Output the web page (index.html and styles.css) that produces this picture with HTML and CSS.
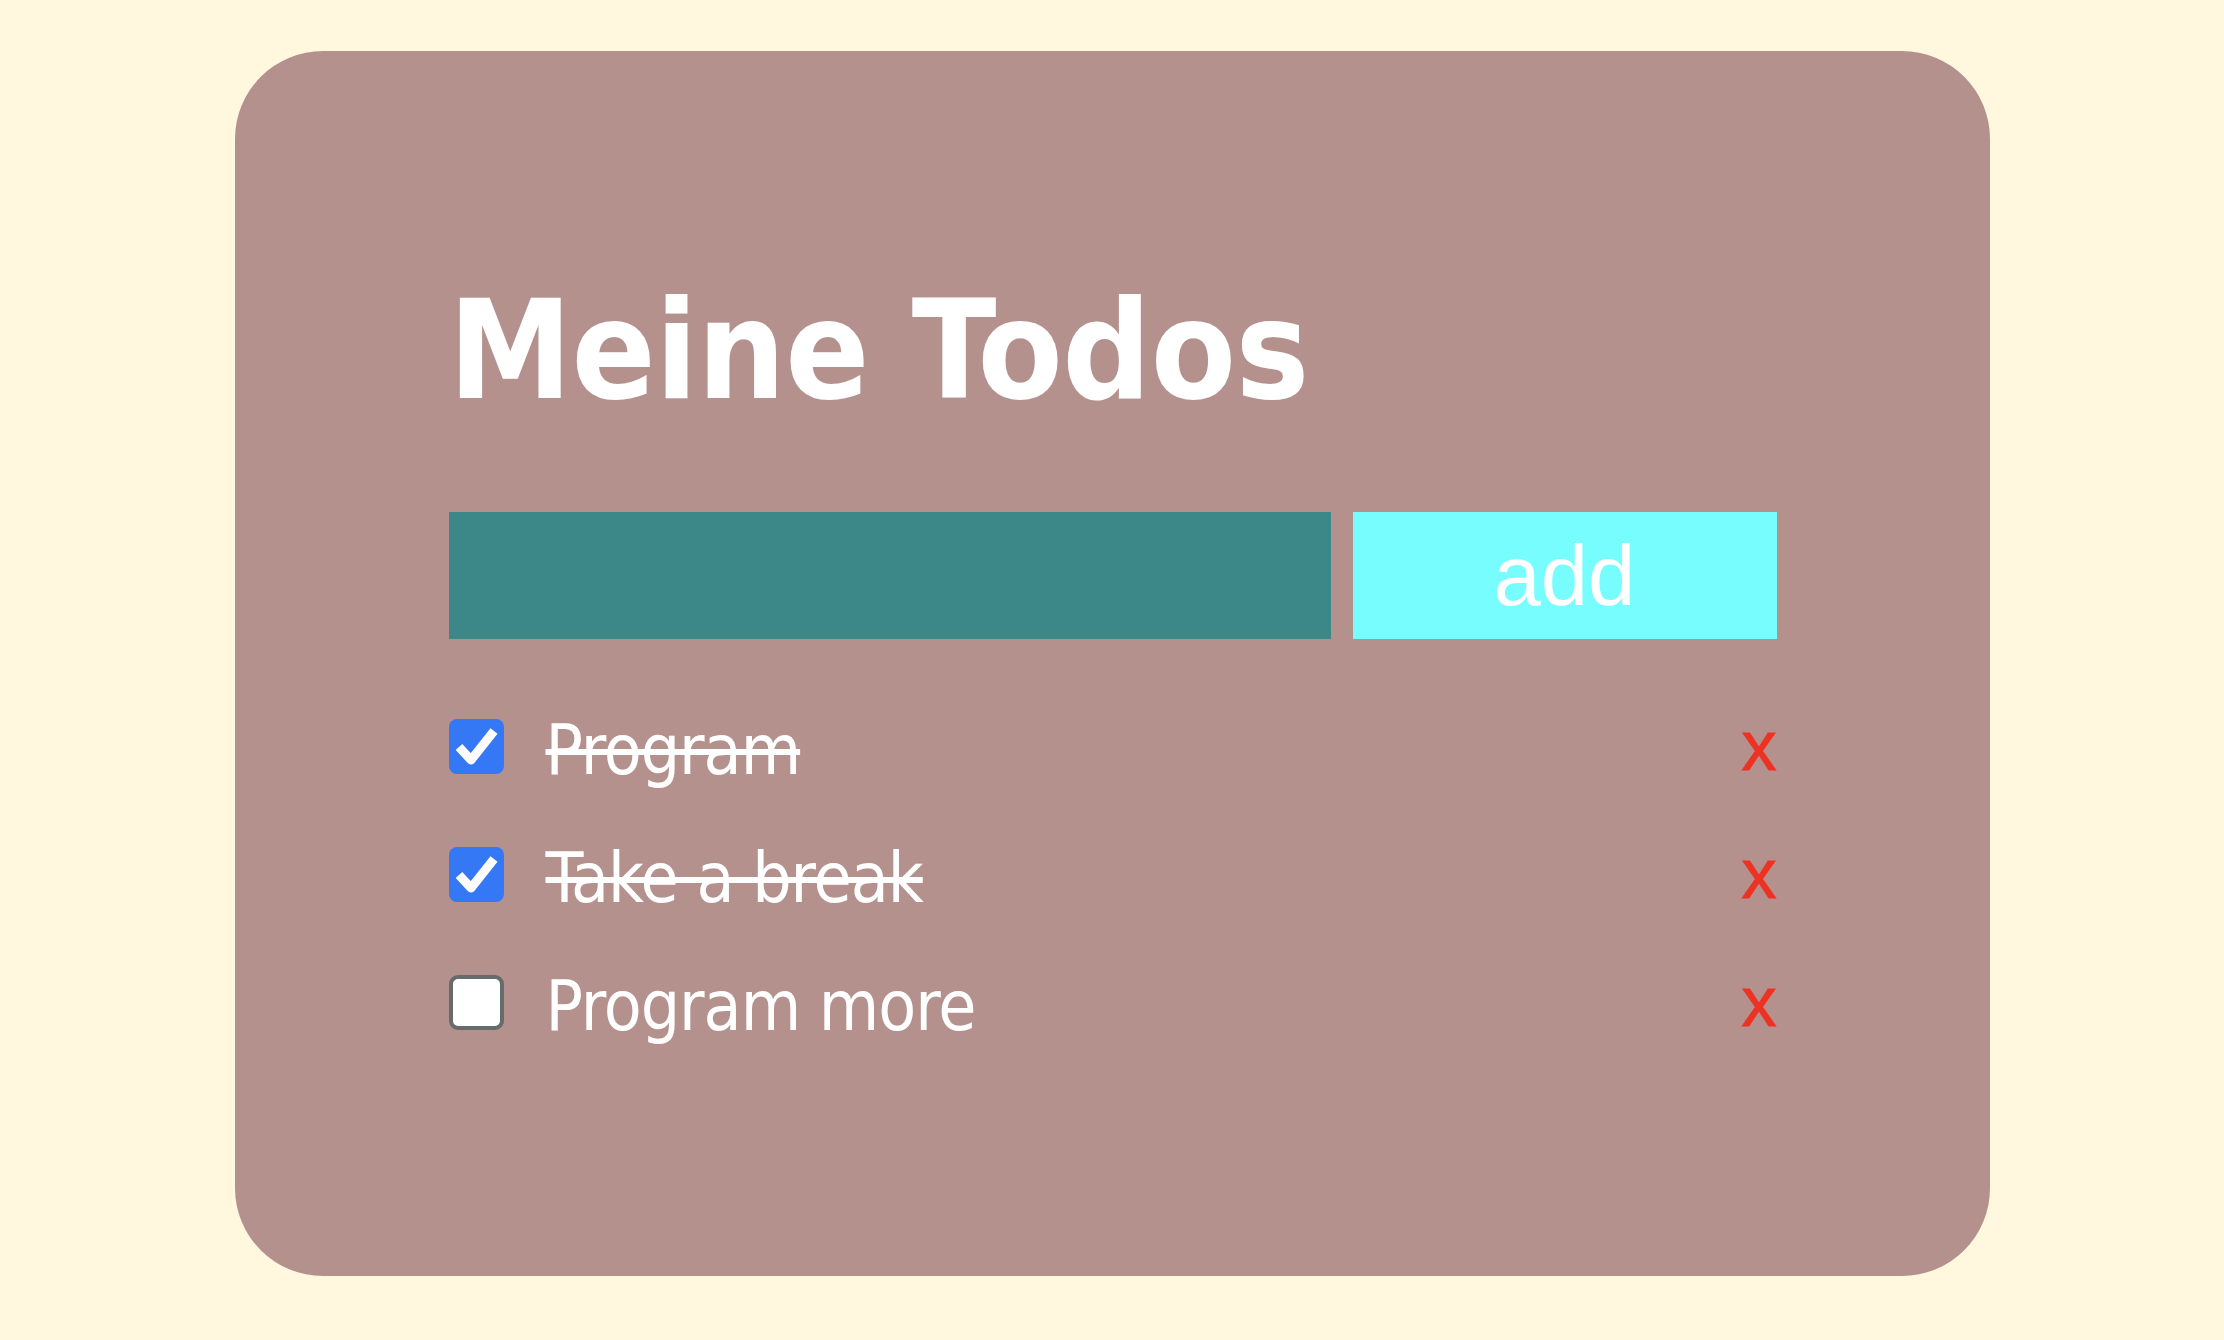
FILE: index.html
```html
<!DOCTYPE html>
<html lang="de">

<head>
    <meta charset="UTF-8">
    <title>Meine Todos</title>
    <link rel="stylesheet" href="styles.css">
</head>

<body>
    <!--todo box-->
    <main class="card">
        <h1 class="title">Meine Todos</h1>
        <!--new todo-->
        <form class="add-form">
            <input type="text" class="add-input">
            <button type="button" class="add-btn">add</button>
        </form>
        <!--todo list-->
        <ul class="todo-list">
            <li class="todo done">
                <span class="box checked">
                    <svg viewBox="0 0 55 55" width="55" height="55">
                        <polyline points="10,28 22,41 45,12" fill="none" stroke="#fff" stroke-width="9" stroke-linejoin="round"/>
                    </svg>
                </span>
                <span class="todo-text">Program</span>
                <span class="del">x</span>
            </li>
            <li class="todo done">
                <span class="box checked">
                    <svg viewBox="0 0 55 55" width="55" height="55">
                        <polyline points="10,28 22,41 45,12" fill="none" stroke="#fff" stroke-width="9" stroke-linejoin="round"/>
                    </svg>
                </span>
                <span class="todo-text">Take a break</span>
                <span class="del">x</span>
            </li>
            <li class="todo">
                <span class="box"></span>
                <span class="todo-text">Program more</span>
                <span class="del">x</span>
            </li>
        </ul>
    </main>
</body>

</html>
```
FILE: styles.css
```css
html,
body,
h1,
ul,
form {
    margin: 0;
    padding: 0;
}

body {
    background: #fff7de;
    font-family: "Liberation Sans", Arial, sans-serif;
}

/*card*/
.card {
    width: 1755px;
    height: 1225px;
    margin: 51px auto 0;
    padding: 231px 213px 0 214px;
    box-sizing: border-box;
    background: #b5918e;
    border-radius: 88px;
}

/*title*/
.title {
    color: #fff;
    font: bold 138px/1 "DejaVu Sans Condensed", "DejaVu Sans", sans-serif;
    font-stretch: condensed;
    letter-spacing: -0.5px;
}

/*form*/
.add-form {
    display: flex;
    gap: 22px;
    margin-top: 92px;
}

.add-input {
    width: 882px;
    height: 127px;
    border: 0;
    padding: 0;
    background: #3c8889;
}

.add-btn {
    flex: 1;
    height: 127px;
    border: 0;
    padding: 0;
    background: #77fdfd;
    color: #fff;
    font: 85px "Liberation Sans", Arial, sans-serif;
}

/*list*/
.todo-list {
    list-style: none;
    margin-top: 43px;
}

.todo {
    display: flex;
    align-items: center;
    height: 128px;
}

.box {
    width: 55px;
    height: 55px;
    margin-right: 42px;
    box-sizing: border-box;
    border: 4px solid #666b6b;
    border-radius: 9px;
    background: #fff;
}

.box.checked {
    border: 0;
    background: #3478f6;
    border-radius: 8px;
}

.box svg {
    display: block;
}

.todo-text {
    flex: 1;
    padding-top: 7px;
    color: #fff;
    font: 69px "DejaVu Sans Condensed", "DejaVu Sans", sans-serif;
    font-stretch: condensed;
    letter-spacing: -1px;
}

.done .todo-text {
    text-decoration: line-through;
}

.del {
    color: #ec3323;
    font: 70px "Liberation Sans", Arial, sans-serif;
    -webkit-text-stroke: 1px #ec3323;
    cursor: pointer;
}
```
